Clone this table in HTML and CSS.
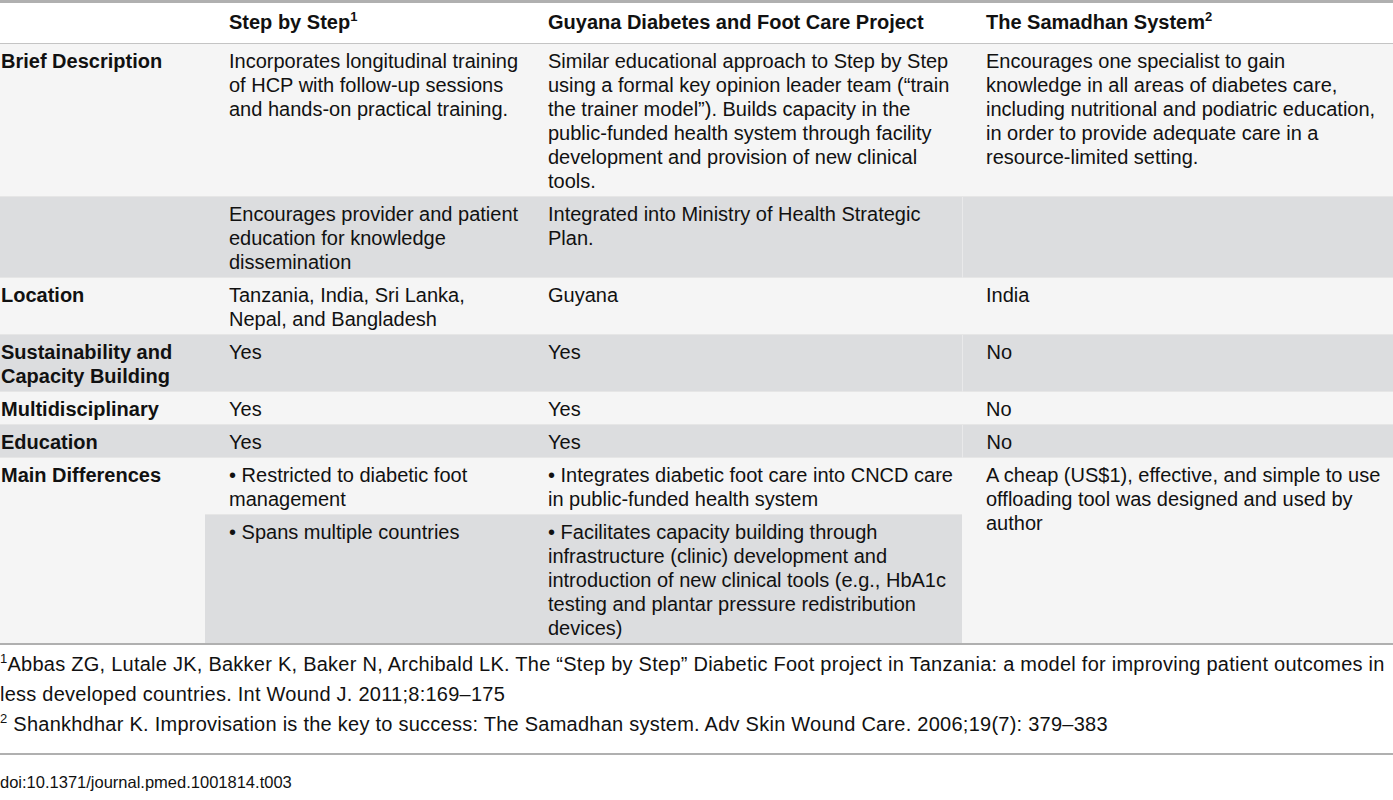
FILE: index.html
```
<!DOCTYPE html>
<html lang="en">

<head>
    <meta charset="UTF-8">
    <meta name="viewport" content="width=device-width, initial-scale=1.0">
    <title>Table 3</title>
    <link rel="stylesheet" href="styles.css">
</head>

<body>
    <table class="grid">
        <colgroup>
            <col class="c1">
            <col class="c2">
            <col class="c3">
            <col class="c4">
        </colgroup>
        <thead>
            <tr>
                <th></th>
                <th>Step by Step<sup>1</sup></th>
                <th>Guyana Diabetes and Foot Care Project</th>
                <th>The Samadhan System<sup>2</sup></th>
            </tr>
        </thead>
        <tbody>
            <tr class="odd">
                <td class="lab">Brief Description</td>
                <td>Incorporates longitudinal training of HCP with follow-up sessions and hands-on practical training.</td>
                <td>Similar educational approach to Step by Step using a formal key opinion leader team (&ldquo;train the trainer model&rdquo;). Builds capacity in the public-funded health system through facility development and provision of new clinical tools.</td>
                <td class="end">Encourages one specialist to gain knowledge in all areas of diabetes care, including nutritional and podiatric education, in order to provide adequate care in a resource-limited setting.</td>
            </tr>
            <tr class="even">
                <td class="lab"></td>
                <td>Encourages provider and patient education for knowledge dissemination</td>
                <td>Integrated into Ministry of Health Strategic Plan.</td>
                <td class="end last"></td>
            </tr>
            <tr class="odd">
                <td class="lab">Location</td>
                <td>Tanzania, India, Sri Lanka, Nepal, and Bangladesh</td>
                <td>Guyana</td>
                <td class="end">India</td>
            </tr>
            <tr class="even">
                <td class="lab">Sustainability and Capacity Building</td>
                <td>Yes</td>
                <td>Yes</td>
                <td class="end last">No</td>
            </tr>
            <tr class="odd">
                <td class="lab">Multidisciplinary</td>
                <td>Yes</td>
                <td>Yes</td>
                <td class="end">No</td>
            </tr>
            <tr class="even">
                <td class="lab">Education</td>
                <td>Yes</td>
                <td>Yes</td>
                <td class="end last">No</td>
            </tr>
            <tr class="odd">
                <td class="lab" rowspan="2">Main Differences</td>
                <td>&bull; Restricted to diabetic foot management</td>
                <td>&bull; Integrates diabetic foot care into CNCD care in public-funded health system</td>
                <td class="end" rowspan="2">A cheap (US$1), effective, and simple to use offloading tool was designed and used by author</td>
            </tr>
            <tr class="even">
                <td>&bull; Spans multiple countries</td>
                <td>&bull; Facilitates capacity building through infrastructure (clinic) development and introduction of new clinical tools (e.g., HbA1c testing and plantar pressure redistribution devices)</td>
            </tr>
        </tbody>
    </table>

    <div class="notes">
        <p><sup>1</sup>Abbas ZG, Lutale JK, Bakker K, Baker N, Archibald LK. The &ldquo;Step by Step&rdquo; Diabetic Foot project in Tanzania: a model for improving patient outcomes in less developed countries. Int Wound J. 2011;8:169&ndash;175</p>
        <p><sup>2</sup> Shankhdhar K. Improvisation is the key to success: The Samadhan system. Adv Skin Wound Care. 2006;19(7): 379&ndash;383</p>
    </div>

    <div class="doi">doi:10.1371/journal.pmed.1001814.t003</div>
</body>

</html>
```

FILE: styles.css
```
* {
    margin: 0;
    padding: 0;
}

body {
    font-family: "Liberation Sans", Arial, sans-serif;
    font-size: 20px;
    color: #111;
    background-color: #fff;
}

sup {
    font-size: 13px;
    line-height: 0;
    vertical-align: 8px;
}

.grid {
    width: 100%;
    border-collapse: collapse;
    table-layout: fixed;
    border-top: 3px solid #b0b0b0;
    border-bottom: 2px solid #b0b0b0;
}

.c1 {
    width: 205px;
}

.c2 {
    width: 319px;
}

.c3 {
    width: 438px;
}

.grid th,
.grid td {
    text-align: left;
    vertical-align: top;
    line-height: 24px;
    padding: 5px 2px 3px 24px;
}

.grid th {
    font-weight: bold;
    padding-top: 7px;
    padding-bottom: 9px;
    background-color: #fff;
    border-bottom: 1px solid #c4c4c4;
}

.grid th:first-child,
.grid .lab {
    padding-left: 1px;
    padding-right: 4px;
}

.grid .lab {
    font-weight: bold;
}

.grid .end {
    padding-right: 9px;
}

.grid td {
    border-top: 1px solid #e6e6e6;
}

.odd td {
    background-color: #f5f5f5;
}

.even td {
    background-color: #dcdddf;
}

.grid .last {
    border-left: 1px solid #e9e9ea;
}

.notes {
    padding-top: 4px;
    padding-bottom: 14px;
    border-bottom: 2px solid #b0b0b0;
}

.notes p {
    line-height: 30px;
    letter-spacing: 0.25px;
}

.doi {
    font-size: 16.5px;
    line-height: 24px;
    padding-top: 15px;
}
```
